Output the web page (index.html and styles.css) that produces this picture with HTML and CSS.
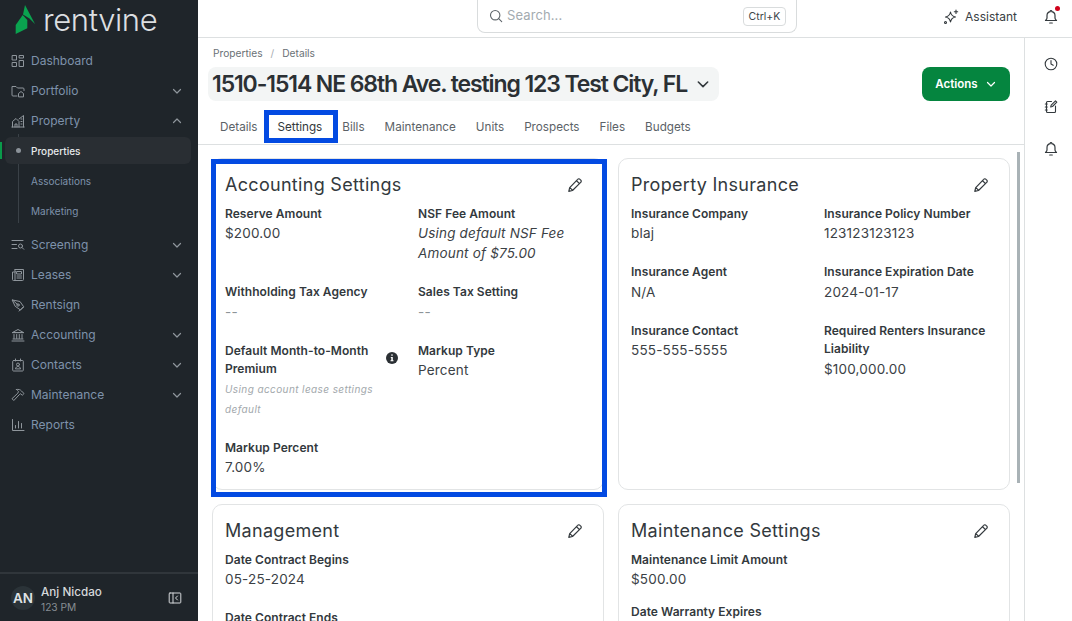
FILE: index.html
```html
<!DOCTYPE html>
<html lang="en">
<head>
<meta charset="utf-8">
<title>Rentvine</title>
<link rel="stylesheet" href="styles.css">
</head>
<body>
<svg class="defs" width="0" height="0" aria-hidden="true">
  <symbol id="chev" viewBox="0 0 12 12"><path d="M2.500 4.500 6 8l3.500-3.500" fill="none" stroke="currentColor" stroke-width="1.200" stroke-linecap="round" stroke-linejoin="round"/></symbol>
  <symbol id="pencil" viewBox="0 0 16 16"><path d="M10.700 2.300a1.500 1.500 0 0 1 2.300 0l.7.700a1.500 1.500 0 0 1 0 2.300L5.500 13.500l-3.700.9.900-3.700zM9.500 3.700l2.800 2.800M2.900 10.600l2.500 2.500" fill="none" stroke="currentColor" stroke-width="1.200" stroke-linejoin="round"/></symbol>
  <symbol id="bell" viewBox="0 0 16 16"><path d="M8 1.500a.8.8 0 0 1 .8.800v.4c2 .4 3.200 2 3.200 4v2.300c0 1 .8 1.700 1.500 2.500H2.500C3.200 10.700 4 10 4 9V6.700c0-2 1.200-3.600 3.200-4v-.4A.8.8 0 0 1 8 1.500zM6.700 14h2.600" fill="none" stroke="currentColor" stroke-width="1.200" stroke-linecap="round" stroke-linejoin="round"/></symbol>
</svg>
<div class="app">
  <aside class="sidebar">
    <div class="brand">
      <svg class="brand-mark" viewBox="0 0 22 30" width="22" height="30" aria-hidden="true"><path d="M10 0 20 19 14.500 13.500 8 9.500z" fill="#0aa34f"/><path d="M7.700 10 12.300 15V23.300L.7 29V20z" fill="#0aa34f"/></svg>
      <span class="brand-name">rentvine</span>
    </div>
    <nav class="nav">
      <a class="nav-item"><svg class="nav-icon" viewBox="0 0 14 14"><path d="M1.500 1.500h4v4.500h-4zM8.500 1.500h4v2.500h-4zM8.500 6.500h4v6h-4zM1.500 8.500h4v4h-4z"/></svg><span>Dashboard</span></a>
      <a class="nav-item"><svg class="nav-icon" viewBox="0 0 14 14"><path d="M6 12H2a1 1 0 0 1-1-1V2.500h4l1.500 1.500H12a1 1 0 0 1 1 1v1.500M7.500 12.500V9.500L10 7.500l2.500 2v3z"/></svg><span>Portfolio</span><svg class="nav-chev"><use href="#chev"/></svg></a>
      <a class="nav-item"><svg class="nav-icon" viewBox="0 0 14 14"><path d="M.8 13h12.400M1.500 13V7.500L5 4.500l3 3V13M8 5l4.500-3.500V13M4 13v-3h2v3M10 5h1M10 7.500h1M10 10h1"/></svg><span>Property</span><svg class="nav-chev nav-chev-up"><use href="#chev"/></svg></a>
      <div class="subnav">
        <a class="sub-item sub-active">Properties</a>
        <a class="sub-item">Associations</a>
        <a class="sub-item">Marketing</a>
      </div>
      <a class="nav-item"><svg class="nav-icon" viewBox="0 0 14 14"><path d="M1 2.500h11M1 6.500h4.500M1 10.500h5"/><circle cx="9.500" cy="8" r="2"/><path d="m11 9.500 1.800 1.800"/></svg><span>Screening</span><svg class="nav-chev"><use href="#chev"/></svg></a>
      <a class="nav-item"><svg class="nav-icon" viewBox="0 0 14 14"><path d="M4 1.500h8.500v10a1 1 0 0 1-1 1H2.500a1 1 0 0 1-1-1V4H4zM4 4v8M6 3.500h4.500v2.500H6zM6 8h4.500M6 10h4.500"/></svg><span>Leases</span><svg class="nav-chev"><use href="#chev"/></svg></a>
      <a class="nav-item"><svg class="nav-icon" viewBox="0 0 14 14"><path d="M1.500 2 9 3.500l3.500 5-3 3.500-5-3.500zM1.500 2l5 4.500M8 13l4.800-4"/><circle cx="7" cy="7" r="1.200"/></svg><span>Rentsign</span></a>
      <a class="nav-item"><svg class="nav-icon" viewBox="0 0 14 14"><path d="M1.500 4.500 7 1.500l5.500 3zM2 4.500h10M3 6.500v4M5.700 6.500v4M8.300 6.500v4M11 6.500v4M2 11h10M1 13h12"/></svg><span>Accounting</span><svg class="nav-chev"><use href="#chev"/></svg></a>
      <a class="nav-item"><svg class="nav-icon" viewBox="0 0 14 14"><path d="M2.500 2.500h9a.8.8 0 0 1 .8.800v8.900a.8.8 0 0 1-.8.800h-9a.8.8 0 0 1-.8-.800V3.300a.8.800 0 0 1 .8-.8zM4.500 1v2M9.500 1v2M4.500 10.500c.4-1.300 1.300-2 2.500-2s2.100.7 2.500 2z"/><circle cx="7" cy="6.500" r="1.500"/></svg><span>Contacts</span><svg class="nav-chev"><use href="#chev"/></svg></a>
      <a class="nav-item"><svg class="nav-icon" viewBox="0 0 14 14"><path d="M5.500 1.500c2-.5 4 .2 5 1.500l2.500 2.500-1.700 1.700-2-1.500-1 1-5.500 5.800L1 10.700l5.800-5.500.7-1.500c-.5-.8-1.200-1.500-2-2.200z"/></svg><span>Maintenance</span><svg class="nav-chev"><use href="#chev"/></svg></a>
      <a class="nav-item"><svg class="nav-icon" viewBox="0 0 14 14"><path d="M1.500 1.500V12.500H13M4.500 10V7.500M7.500 10V3.500M10.500 10V5.500"/></svg><span>Reports</span></a>
    </nav>
    <div class="user">
      <span class="avatar">AN</span>
      <div class="user-text">
        <span class="user-name">Anj Nicdao</span>
        <span class="user-org">123 PM</span>
      </div>
      <svg class="collapse" viewBox="0 0 14 14" width="14" height="14"><path d="M2 2h10a.8.8 0 0 1 .8.800v8.400a.8.8 0 0 1-.8.800H2a.8.800 0 0 1-.8-.8V2.800A.8.800 0 0 1 2 2zM5 2v10M9.500 5 7.500 7l2 2"/></svg>
    </div>
  </aside>

  <div class="column">
    <header class="topbar">
      <div class="search">
        <svg class="search-icon" viewBox="0 0 14 14" width="14" height="14"><circle cx="6.200" cy="6.200" r="4.700"/><path d="m9.700 9.700 3 3"/></svg>
        <span class="search-text">Search...</span>
        <kbd class="kbd">Ctrl+K</kbd>
      </div>
      <div class="top-actions">
        <svg class="spark" viewBox="0 0 16 16" width="16" height="16"><path d="M7.500 3c.5 3 1.800 4.300 5 5-3.200.7-4.500 2-5 5-.5-3-1.800-4.300-5-5 3.200-.7 4.500-2 5-5z"/><path d="M13 1v3.500M11.300 2.700h3.400"/><circle cx="2.500" cy="13.500" r="1"/></svg>
        <span class="assistant">Assistant</span>
        <span class="top-bell"><svg width="16" height="16"><use href="#bell"/></svg><i class="dot"></i></span>
      </div>
    </header>
    <div class="body">
      <main class="main">
        <div class="page-head">
          <div class="crumbs"><span>Properties</span><span class="slash">/</span><span>Details</span></div>
          <div class="title-row">
            <div class="title-pill">
              <h1 class="title">1510-1514 NE 68th Ave. testing 123 Test City, FL</h1>
              <svg class="title-chev"><use href="#chev"/></svg>
            </div>
            <button class="actions">Actions<svg class="actions-chev"><use href="#chev"/></svg></button>
          </div>
          <div class="tabs">
            <a class="tab">Details</a>
            <a class="tab tab-marked">Settings<i class="mark"></i></a>
            <a class="tab">Bills</a>
            <a class="tab">Maintenance</a>
            <a class="tab">Units</a>
            <a class="tab">Prospects</a>
            <a class="tab">Files</a>
            <a class="tab">Budgets</a>
          </div>
        </div>
        <div class="scroller">
          <div class="cards">
            <section class="card card-marked">
              <i class="card-mark"></i>
              <div class="card-head"><h2 class="card-title">Accounting Settings</h2><svg class="edit"><use href="#pencil"/></svg></div>
              <div class="fields">
                <div class="field"><div class="label">Reserve Amount</div><div class="value">$200.00</div></div>
                <div class="field"><div class="label">NSF Fee Amount</div><div class="value italic">Using default NSF Fee Amount of $75.00</div></div>
                <div class="field"><div class="label">Withholding Tax Agency</div><div class="value muted">--</div></div>
                <div class="field"><div class="label">Sales Tax Setting</div><div class="value muted">--</div></div>
                <div class="field field-info">
                  <div class="label">Default Month-to-Month Premium</div>
                  <div class="hint">Using account lease settings default</div>
                  <svg class="info" viewBox="0 0 12 12" width="12" height="12"><circle cx="6" cy="6" r="6"/><rect x="5.200" y="2.300" width="1.600" height="1.600" rx=".8" class="info-mark"/><path d="M4.800 5h2v3.300h.7v1H4.500v-1h.8V6h-.5z" class="info-mark"/></svg>
                </div>
                <div class="field"><div class="label">Markup Type</div><div class="value">Percent</div></div>
                <div class="field"><div class="label">Markup Percent</div><div class="value">7.00%</div></div>
              </div>
            </section>
            <section class="card">
              <div class="card-head"><h2 class="card-title">Property Insurance</h2><svg class="edit"><use href="#pencil"/></svg></div>
              <div class="fields">
                <div class="field"><div class="label">Insurance Company</div><div class="value">blaj</div></div>
                <div class="field"><div class="label">Insurance Policy Number</div><div class="value">123123123123</div></div>
                <div class="field"><div class="label">Insurance Agent</div><div class="value">N/A</div></div>
                <div class="field"><div class="label">Insurance Expiration Date</div><div class="value">2024-01-17</div></div>
                <div class="field"><div class="label">Insurance Contact</div><div class="value">555-555-5555</div></div>
                <div class="field"><div class="label">Required Renters Insurance Liability</div><div class="value">$100,000.00</div></div>
              </div>
            </section>
            <section class="card">
              <div class="card-head"><h2 class="card-title">Management</h2><svg class="edit"><use href="#pencil"/></svg></div>
              <div class="fields fields-single">
                <div class="field"><div class="label">Date Contract Begins</div><div class="value">05-25-2024</div></div>
                <div class="field"><div class="label">Date Contract Ends</div></div>
              </div>
            </section>
            <section class="card">
              <div class="card-head"><h2 class="card-title">Maintenance Settings</h2><svg class="edit"><use href="#pencil"/></svg></div>
              <div class="fields fields-single fields-tight">
                <div class="field"><div class="label">Maintenance Limit Amount</div><div class="value">$500.00</div></div>
                <div class="field"><div class="label">Date Warranty Expires</div></div>
              </div>
            </section>
          </div>
          <div class="scrollbar"></div>
        </div>
      </main>
      <aside class="rail">
        <svg class="rail-icon" viewBox="0 0 16 16" width="16" height="16"><circle cx="8" cy="8" r="5.800"/><path d="M8 4.500V8l2.200 1.300"/></svg>
        <svg class="rail-icon" viewBox="0 0 16 16" width="16" height="16"><path d="M8.500 2.500H4.500a1 1 0 0 0-1 1v9a1 1 0 0 0 1 1h7a1 1 0 0 0 1-1V7M2.300 5h2M2.300 8h2M2.300 11h2M12.500 1.800l1.300 1.300L9.500 7.500l-1.800.5.500-1.800z"/></svg>
        <svg class="rail-bell" width="16" height="16"><use href="#bell"/></svg>
      </aside>
    </div>
  </div>
</div>
</body>
</html>
```
FILE: styles.css
```css
* { box-sizing: border-box; }
html, body { height: 100%; }
body { margin: 0; overflow: hidden; font-family: Inter, "Liberation Sans", sans-serif; color: #2b3034; background: #fff; }
.defs { position: absolute; }
h1, h2 { margin: 0; font-weight: inherit; }

.app { display: flex; height: 621px; }

/* sidebar */
.sidebar { width: 198px; flex: none; background: #1f252a; display: flex; flex-direction: column; color: #7e92ab; }
.brand { height: 45.500px; display: flex; align-items: flex-start; padding: 5px 0 0 15px; gap: 6px; }
.brand-mark { flex: none; }
.brand-name { font-family: Inter, sans-serif; font-weight: 300; font-size: 31px; line-height: 32px; letter-spacing: -.4px; color: #dcdfe1; margin-top: -1px; }
.nav { flex: 1; }
.nav-item { display: flex; align-items: center; height: 30px; padding: 0 15px 0 11px; font-size: 12px; gap: 6px; }
.nav-item span { flex: 1; }
.nav-icon { width: 14px; height: 14px; flex: none; fill: none; stroke: #8f969c; stroke-width: 1; stroke-linejoin: round; stroke-linecap: round; }
.nav-chev { width: 12px; height: 12px; color: #8f969c; flex: none; }
.nav-chev-up { transform: rotate(180deg); }
.subnav { position: relative; padding-left: 5px; margin-right: 7px; margin-bottom: 4px; }
.subnav::before { content: ""; position: absolute; left: 18px; top: -3px; bottom: 3px; width: 1px; background: #3a4147; }
.sub-item { position: relative; display: flex; align-items: center; height: 30px; padding-left: 26px; font-size: 10px; border-radius: 6px; }
.sub-active { color: #e7eaec; background: #292e33; height: 27px; margin: 1.500px 0; font-weight: 500; }
.sub-active::before { content: ""; position: absolute; left: 11px; top: 11px; width: 5px; height: 5px; border-radius: 50%; background: #8b9299; }
.sub-active::after { content: ""; position: absolute; left: -5px; top: 5px; width: 2px; height: 17px; background: #0a9a4a; }
.user { height: 49px; flex: none; border-top: 2px solid #30363b; display: flex; align-items: center; padding: 0 16px 0 11px; gap: 6px; }
.avatar { width: 24px; height: 24px; border-radius: 50%; background: #2b3338; color: #dfe2e4; font-size: 13.500px; font-weight: 600; display: flex; align-items: center; justify-content: center; flex: none; }
.user-text { flex: 1; display: flex; flex-direction: column; gap: 1px; margin-top: 3px; }
.user-name { font-size: 11.700px; font-weight: 500; color: #d5d8da; line-height: 15px; }
.user-org { font-size: 10.200px; color: #868d93; line-height: 13px; }
.collapse { fill: none; stroke: #d5d8da; stroke-width: 1; stroke-linejoin: round; stroke-linecap: round; flex: none; }

/* top bar */
.column { flex: 1; min-width: 0; display: flex; flex-direction: column; }
.topbar { position: relative; height: 38px; flex: none; border-bottom: 1px solid #dde0e1; display: flex; align-items: flex-start; padding-left: 279px; }
.search { width: 320px; height: 33px; border: 1px solid #d9dcdd; border-top: 0; border-radius: 0 0 8px 8px; display: flex; align-items: center; padding: 0 10px 0 11px; gap: 4px; }
.search-icon { fill: none; stroke: #5f666b; stroke-width: 1.100; stroke-linecap: round; flex: none; margin-bottom: 1px; }
.search-text { flex: 1; font-size: 13px; line-height: 16px; color: #a3abb0; letter-spacing: .1px; margin-bottom: 3px; }
.kbd { font-family: Inter, sans-serif; font-size: 10.500px; color: #40464a; border: 1px solid #d9dcdd; border-radius: 4px; height: 19px; width: 43px; display: flex; align-items: center; justify-content: center; }
.top-actions { margin-left: auto; height: 33px; display: flex; align-items: center; padding-right: 13px; }
.spark { fill: none; stroke: #33393d; stroke-width: 1.100; stroke-linecap: round; stroke-linejoin: round; }
.assistant { font-size: 12px; color: #3a4044; margin-left: 6px; }
.top-bell { position: relative; display: flex; margin-left: 26px; color: #33393d; }
.dot { position: absolute; right: -1px; top: -3px; width: 5px; height: 5px; border-radius: 50%; background: #d0021b; }

/* main */
.body { flex: 1; min-height: 0; display: flex; }
.main { flex: 1; min-width: 0; display: flex; flex-direction: column; }
.page-head { height: 107px; flex: none; border-bottom: 1px solid #dde0e1; padding: 8px 0 0 10px; }
.crumbs { display: flex; gap: 6px; padding-left: 5px; font-size: 10.200px; line-height: 14px; color: #6a7176; }
.slash { color: #a5abaf; margin: 0 2px; }
.title-row { display: flex; justify-content: space-between; align-items: center; padding-right: 14px; margin-top: 7px; }
.title-pill { display: flex; align-items: center; height: 34px; width: 511px; background: #f3f5f5; border-radius: 8px; padding-left: 4px; }
.title { font-size: 23px; font-weight: 600; letter-spacing: -1.100px; color: #2b3034; white-space: nowrap; line-height: 34px; }
.title-chev { width: 16px; height: 16px; margin-left: 8px; color: #33393d; }
.actions { width: 88px; height: 34px; border: 0; border-radius: 8px; background: #05853f; color: #fff; font-family: Inter, sans-serif; font-size: 11.500px; font-weight: 600; display: flex; align-items: center; justify-content: center; gap: 7px; padding: 0; }
.actions-chev { width: 12px; height: 12px; }
.tabs { display: flex; padding-left: 2px; margin-top: 10px; }
.tab { position: relative; font-size: 11.700px; line-height: 32px; height: 32px; padding: 0 10px; color: #5b6267; white-space: nowrap; }
.tab-marked { color: #33393d; }
.mark { position: absolute; left: -4px; right: -6px; top: -1px; bottom: 0; border: 5px solid #034ae2; }

/* cards */
.scroller { position: relative; flex: 1; min-height: 0; overflow: hidden; padding: 13px 0 0 14px; }
.cards { display: grid; grid-template-columns: 392px 392px; column-gap: 14px; row-gap: 14px; grid-auto-rows: min-content; }
.card { position: relative; border: 1px solid #e2e4e5; border-radius: 10px; background: #fff; padding: 0 12px 12px; }
.card-mark { position: absolute; left: -2.500px; right: -3.500px; top: -.5px; bottom: -7.500px; border: 5px solid #034ae2; z-index: 1; }
.card-head { display: flex; justify-content: space-between; align-items: center; height: 46px; padding-top: 5px; }
.card-title { font-size: 18px; letter-spacing: .3px; color: #33393d; }
.edit { width: 16px; height: 16px; margin-right: 8px; color: #33393d; }
.fields { display: grid; grid-template-columns: 193px 1fr; row-gap: 20px; }
.fields-single { grid-template-columns: 1fr; }
.fields-tight { row-gap: 14px; }
.field { position: relative; min-width: 0; padding-right: 10px; }
.label { font-size: 12px; font-weight: 600; line-height: 18.400px; color: #33393d; letter-spacing: .05px; }
.value { font-size: 13.500px; line-height: 20px; letter-spacing: .18px; color: #3b4145; }
.italic { font-style: italic; }
.muted { color: #8d9498; }
.field-info { padding-right: 24px; }
.hint { font-size: 10px; line-height: 20px; font-style: italic; letter-spacing: .4px; color: #a2a8ac; }
.info { position: absolute; right: 20px; top: 10px; fill: #2b3034; }
.info-mark { fill: #fff; }
.scrollbar { position: absolute; right: 4px; top: 7px; width: 3px; height: 331px; background: #a9b2b6; }

/* right rail */
.rail { width: 48px; flex: none; border-left: 1px solid #dde0e1; display: flex; flex-direction: column; align-items: center; padding: 18px 0 0 4px; gap: 26.500px; }
.rail-icon { fill: none; stroke: #33393d; stroke-width: 1.100; stroke-linecap: round; stroke-linejoin: round; }
.rail-bell { color: #33393d; }
```
